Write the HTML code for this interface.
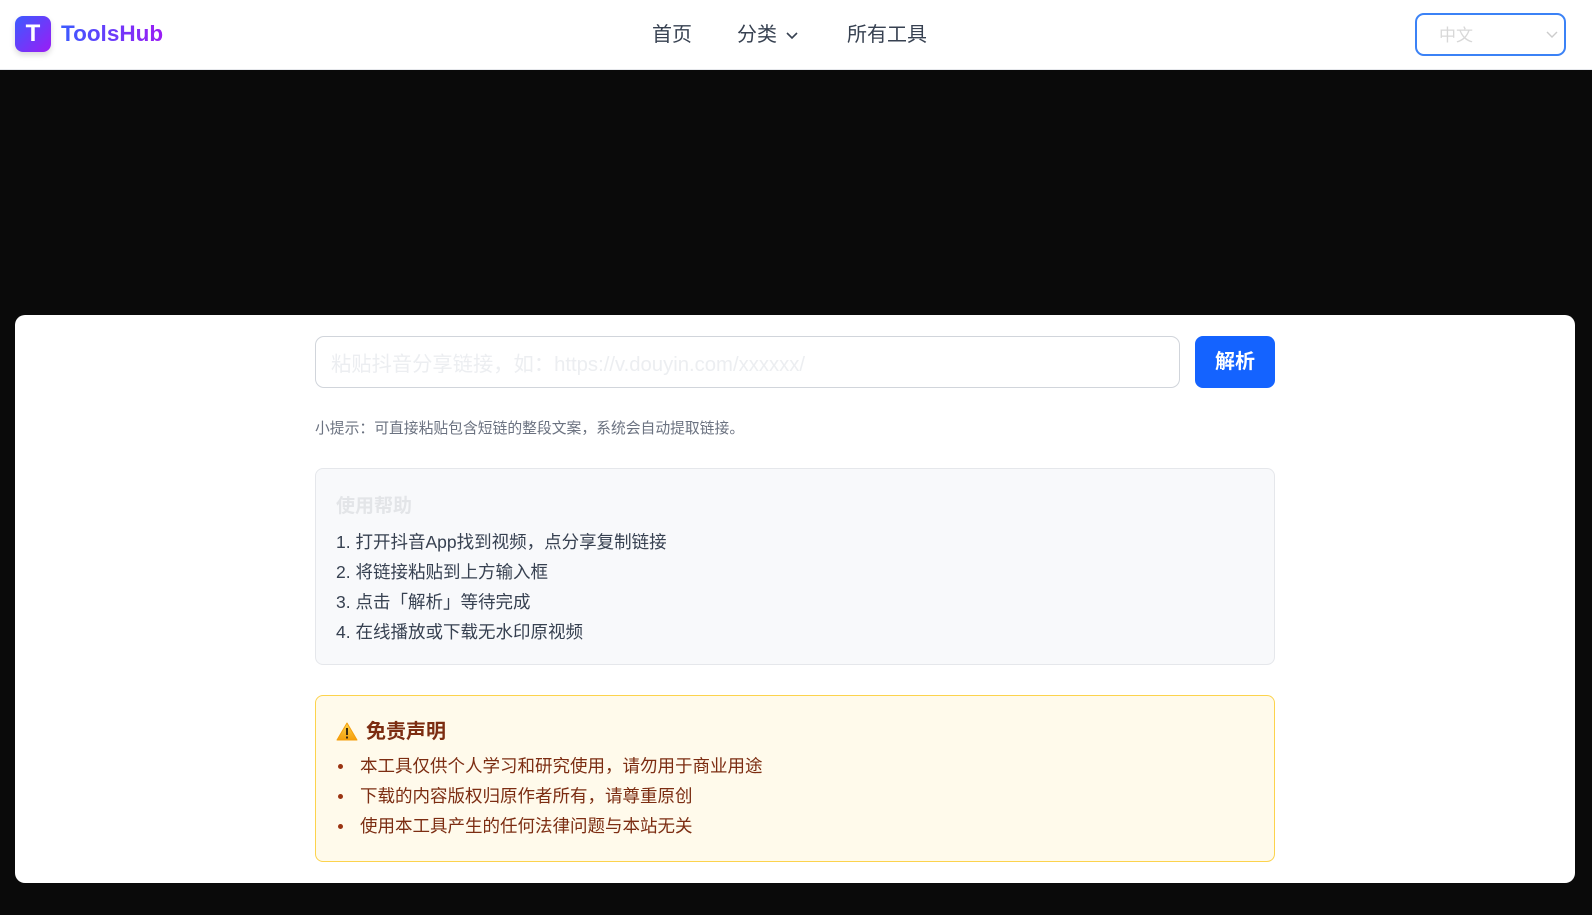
<!DOCTYPE html>
<html><head><meta charset="utf-8"><style>
*{box-sizing:border-box;margin:0;padding:0}
body{width:1592px;height:915px;background:#0a0a0a;font-family:"Liberation Sans","Noto Sans CJK SC",sans-serif;position:relative;overflow:hidden}
.hdr{position:absolute;left:0;top:0;width:1592px;height:70px;background:#fff;border-bottom:1px solid #e5e7eb}
.logo{position:absolute;left:15px;top:16px;width:36px;height:36px;border-radius:8px;background:linear-gradient(135deg,#3b5bff,#9b1cf5);color:#fff;font-weight:bold;font-size:24px;text-align:center;line-height:36px;box-shadow:0 3px 6px rgba(0,0,0,.15)}
.brand{position:absolute;left:61px;top:21px;font-size:22.5px;font-weight:bold;background:linear-gradient(90deg,#3b5bff,#9b1cf5);-webkit-background-clip:text;color:transparent}
.nav{position:absolute;top:18px;font-size:20px;color:#374151}
.sel{position:absolute;left:1415px;top:13px;width:151px;height:43px;border:2px solid #3b82f6;border-radius:9px;color:#d8d8d8;font-size:17px;padding:6px 0 0 22px}
.card{position:absolute;left:15px;top:315px;width:1560px;height:568px;background:#fff;border-radius:10px}
.inp{position:absolute;left:315px;top:336px;width:865px;height:52px;border:1px solid #d1d5db;border-radius:9px;color:#eceef1;font-size:20.3px;padding:10px 0 0 15px}
.btn{position:absolute;left:1195px;top:336px;width:80px;height:52px;background:#1463ff;border-radius:8px;color:#fff;font-size:20px;font-weight:bold;text-align:center;line-height:52px}
.tip{position:absolute;left:315px;top:417px;font-size:14.8px;color:#6b7280}
.help{position:absolute;left:315px;top:468px;width:960px;height:197px;background:#f8f9fb;border:1px solid #e5e7eb;border-radius:8px;padding:22px 20px}
.help h3{font-size:19px;color:#e3e5e8;margin-bottom:9px}
.help p{font-size:17.5px;color:#374151;line-height:30px}
.warn{position:absolute;left:315px;top:695px;width:960px;height:167px;background:#fffaeb;border:1px solid #fcd34d;border-radius:8px;padding:19px 20px}
.warn h3{font-size:20px;color:#7c2d12;margin-bottom:7px}
.warn li{font-size:17.5px;color:#7c2d12;line-height:30px;margin-left:24px;list-style:none;position:relative}
.warn li:before{content:"";position:absolute;left:-22px;top:13px;width:5px;height:5px;border-radius:50%;background:#9a3412}
</style></head><body>
<div class="hdr">
<div class="logo">T</div><div class="brand">ToolsHub</div>
<div class="nav" style="left:652px">首页</div>
<div class="nav" style="left:737px">分类 <svg width="14" height="10" viewBox="0 0 14 10" style="margin-left:2px"><path d="M2 2l5 5 5-5" stroke="#374151" stroke-width="1.6" fill="none"/></svg></div>
<div class="nav" style="left:847px">所有工具</div>
<div class="sel">中文<svg width="12" height="8" viewBox="0 0 12 8" style="position:absolute;right:6px;top:16px"><path d="M1 1l5 5 5-5" stroke="#ccc" stroke-width="1.4" fill="none"/></svg></div>
</div>
<div class="card"></div>
<div class="inp">粘贴抖音分享链接，如：https://v.douyin.com/xxxxxx/</div>
<div class="btn">解析</div>
<div class="tip">小提示：可直接粘贴包含短链的整段文案，系统会自动提取链接。</div>
<div class="help"><h3>使用帮助</h3>
<p>1. 打开抖音App找到视频，点分享复制链接</p><p>2. 将链接粘贴到上方输入框</p><p>3. 点击「解析」等待完成</p><p>4. 在线播放或下载无水印原视频</p></div>
<div class="warn"><h3><svg width="22" height="19" viewBox="0 0 22 19" style="vertical-align:-3px;margin-right:8px"><defs><linearGradient id="g" x1="0" y1="0" x2="0" y2="1"><stop offset="0" stop-color="#fcd34d"/><stop offset="1" stop-color="#f59e0b"/></linearGradient></defs><path d="M11 1L21 18H1Z" fill="url(#g)" stroke="#f59e0b" stroke-linejoin="round"/><rect x="10" y="6" width="2" height="7" fill="#3b2a10"/><rect x="10" y="14.5" width="2" height="2" fill="#3b2a10"/></svg>免责声明</h3>
<ul><li>本工具仅供个人学习和研究使用，请勿用于商业用途</li><li>下载的内容版权归原作者所有，请尊重原创</li><li>使用本工具产生的任何法律问题与本站无关</li></ul></div>
</body></html>
